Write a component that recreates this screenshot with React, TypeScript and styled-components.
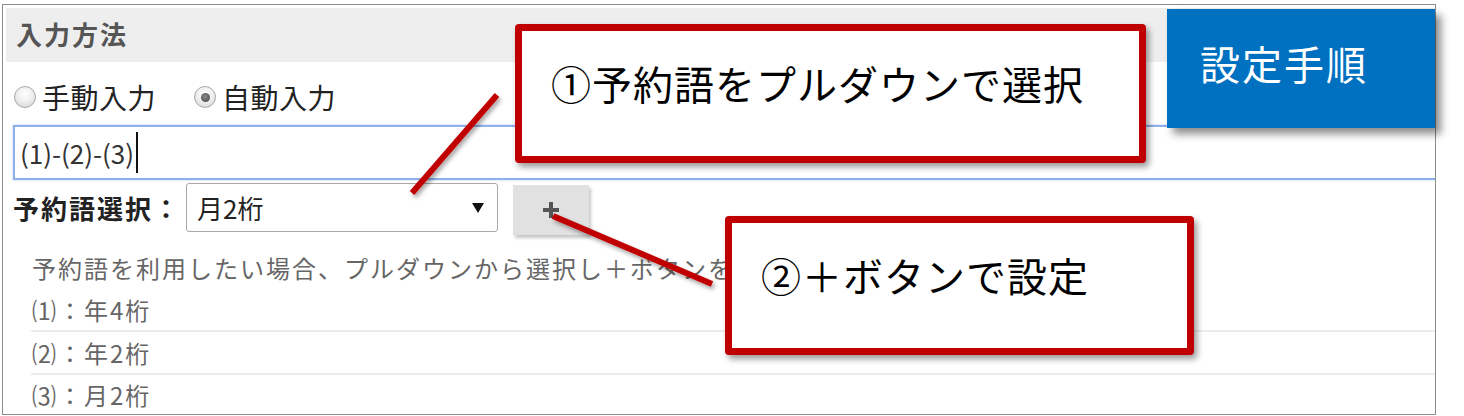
import React from 'react';
import styled, { createGlobalStyle } from 'styled-components';

const GlobalStyle = createGlobalStyle`
    html, body {
        margin: 0;
        padding: 0;
        background: #ffffff;
    }
    body {
        font-family: "Noto Sans CJK JP", "Noto Sans", sans-serif;
        color: #222;
    }
`;

const Page = styled.div`
    position: relative;
    width: 1464px;
    height: 416px;
    overflow: hidden;
    background: #ffffff;
`;

const Frame = styled.div`
    box-sizing: border-box;
    margin: 4px 0 0 2px;
    width: 1434px;
    height: 411px;
    border: 1px solid #8c8c8c;
    padding: 3px 0 0 3px;
    overflow: hidden;
`;

const SectionHeader = styled.div`
    box-sizing: border-box;
    height: 54px;
    display: flex;
    align-items: center;
    padding: 0 0 4px 10px;
    background: #eeeeee;
    color: #555;
    font-size: 26px;
    font-weight: 700;
    letter-spacing: 2px;
`;

const RadioRow = styled.div`
    display: flex;
    align-items: center;
    height: 36px;
    margin-top: 17px;
    padding-left: 8px;
    gap: 38px;
`;

const RadioOption = styled.label`
    display: flex;
    align-items: center;
    gap: 6px;
    font-size: 28px;
    letter-spacing: 0.5px;
    color: #222;
`;

const RadioDot = styled.span<{ $checked?: boolean }>`
    box-sizing: border-box;
    width: 22px;
    height: 22px;
    border-radius: 50%;
    border: 1px solid #a8a8a8;
    background: radial-gradient(circle at 50% 35%, #ffffff 0%, #f0f0f0 45%, #d2d2d2 100%);
    display: flex;
    align-items: center;
    justify-content: center;

    &::after {
        content: '';
        display: ${({ $checked }) => ($checked ? 'block' : 'none')};
        width: 9px;
        height: 9px;
        border-radius: 50%;
        background: radial-gradient(circle at 45% 40%, #8a8a8a 0%, #444 100%);
    }
`;

const TextField = styled.div`
    box-sizing: border-box;
    height: 55px;
    margin: 10px 0 0 7px;
    border: 2px solid #8db1e8;
    border-right: none;
    box-shadow: 0 0 2px rgba(120, 160, 230, 0.6);
    display: flex;
    align-items: center;
    padding-left: 5px;
    font-size: 26px;
    color: #333;
`;

const Caret = styled.span`
    display: inline-block;
    width: 2px;
    height: 41px;
    margin-left: 2px;
    background: #111;
`;

const PickerRow = styled.div`
    display: flex;
    align-items: flex-start;
    height: 52px;
    margin: 3px 0 0 7px;
`;

const PickerLabel = styled.div`
    width: 173px;
    height: 49px;
    display: flex;
    align-items: center;
    font-size: 26px;
    font-weight: 700;
    letter-spacing: 2px;
    color: #222;
`;

const Select = styled.div`
    box-sizing: border-box;
    width: 312px;
    height: 49px;
    border: 1px solid #a9a9a9;
    border-radius: 3px;
    display: flex;
    align-items: center;
    justify-content: space-between;
    padding: 0 13px 0 10px;
    font-size: 26px;
    color: #222;
`;

const AddButton = styled.div`
    box-sizing: border-box;
    width: 76px;
    height: 50px;
    margin: 2px 0 0 15px;
    background: #e1e1e1;
    box-shadow: 2px 3px 3px rgba(0, 0, 0, 0.22);
    display: flex;
    align-items: center;
    justify-content: center;
`;

const HelpText = styled.div`
    height: 44px;
    margin: 10px 0 0 26px;
    display: flex;
    align-items: center;
    font-size: 24px;
    letter-spacing: 2px;
    color: #666;
    white-space: nowrap;
`;

const TokenList = styled.div`
    margin-left: 25px;
`;

const TokenRow = styled.div<{ $last?: boolean }>`
    height: ${({ $last }) => ($last ? '39px' : '41px')};
    display: flex;
    align-items: center;
    padding-left: 1px;
    border-bottom: ${({ $last }) => ($last ? 'none' : '2px solid #ececec')};
    font-size: 24px;
    letter-spacing: 2px;
    color: #666;
`;

const Callout = styled.div`
    position: absolute;
    box-sizing: border-box;
    border: 7px solid #c00000;
    border-radius: 4px;
    background: #ffffff;
    box-shadow: 3px 4px 6px rgba(0, 0, 0, 0.4);
    padding: 28px 0 0 29px;
    font-size: 40px;
    line-height: 48px;
    letter-spacing: 1px;
    color: #000;
    white-space: nowrap;
`;

const StepsBadge = styled.div`
    position: absolute;
    left: 1167px;
    top: 9px;
    box-sizing: border-box;
    width: 268px;
    height: 119px;
    background: #0070c0;
    box-shadow: 6px 6px 8px rgba(0, 0, 0, 0.45);
    padding: 30px 0 0 33px;
    font-size: 40px;
    line-height: 48px;
    letter-spacing: 2px;
    color: #ffffff;
`;

const Leaders = styled.svg`
    position: absolute;
    left: 0;
    top: 0;
    pointer-events: none;
`;

const tokens = ['⑴：年4桁', '⑵：年2桁', '⑶：月2桁'];

export default function App() {
    return (
        <Page>
            <GlobalStyle />
            <Frame>
                <SectionHeader>入力方法</SectionHeader>
                <RadioRow>
                    <RadioOption>
                        <RadioDot />
                        手動入力
                    </RadioOption>
                    <RadioOption>
                        <RadioDot $checked />
                        自動入力
                    </RadioOption>
                </RadioRow>
                <TextField>
                    (1)-(2)-(3)
                    <Caret />
                </TextField>
                <PickerRow>
                    <PickerLabel>予約語選択：</PickerLabel>
                    <Select>
                        <span>月2桁</span>
                        <svg width="12" height="10" viewBox="0 0 12 10">
                            <path d="M0 0 L12 0 L6 10 Z" fill="#111" />
                        </svg>
                    </Select>
                    <AddButton>
                        <svg width="18" height="18" viewBox="0 0 18 18">
                            <path d="M9 1 V17 M1 9 H17" stroke="#555" strokeWidth="4" />
                        </svg>
                    </AddButton>
                </PickerRow>
                <HelpText>予約語を利用したい場合、プルダウンから選択し＋ボタンを押してください。</HelpText>
                <TokenList>
                    {tokens.map((t, i) => (
                        <TokenRow key={t} $last={i === tokens.length - 1}>
                            {t}
                        </TokenRow>
                    ))}
                </TokenList>
            </Frame>

            <Leaders width="1464" height="416">
                <defs>
                    <filter id="lineShadow" x="-20%" y="-20%" width="140%" height="140%">
                        <feDropShadow dx="2" dy="3" stdDeviation="2" floodColor="#000" floodOpacity="0.35" />
                    </filter>
                </defs>
                <line x1="497" y1="95" x2="412" y2="193" stroke="#c00000" strokeWidth="6" filter="url(#lineShadow)" />
                <line x1="553" y1="216" x2="712" y2="284" stroke="#c00000" strokeWidth="6" filter="url(#lineShadow)" />
            </Leaders>

            <Callout style={{ left: 515, top: 24, width: 631, height: 139 }}>①予約語をプルダウンで選択</Callout>
            <Callout style={{ left: 725, top: 216, width: 469, height: 139 }}>②＋ボタンで設定</Callout>
            <StepsBadge>設定手順</StepsBadge>
        </Page>
    );
}
